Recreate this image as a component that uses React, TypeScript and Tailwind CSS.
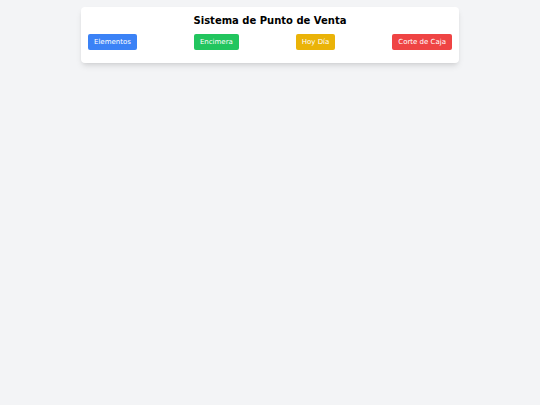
export default function App() {
  const btns = [
    { t: "Elementos", c: "bg-[#3b82f6]" },
    { t: "Encimera", c: "bg-[#22c55e]" },
    { t: "Hoy Día", c: "bg-[#eab308]" },
    { t: "Corte de Caja", c: "bg-[#ef4444]" },
  ];
  return (
    <div className="min-h-[405px] bg-[#f3f4f6] pt-[7px]" style={{ fontFamily: '"DejaVu Sans", sans-serif' }}>
      <div className="mx-auto w-[378px] rounded-[4px] bg-white px-[7px] pt-[8px] pb-[13px] shadow-[0_4px_6px_-1px_rgba(0,0,0,0.1),0_2px_4px_-2px_rgba(0,0,0,0.1)]">
        <h1 className="text-center text-[10px] font-bold leading-[12px] text-black">Sistema de Punto de Venta</h1>
        <div className="mt-[7px] flex justify-between">
          {btns.map((b) => (
            <button key={b.t} className={`${b.c} h-[16px] rounded-[2px] px-[6px] text-[7px] leading-[16px] text-white`}>
              {b.t}
            </button>
          ))}
        </div>
      </div>
    </div>
  );
}
